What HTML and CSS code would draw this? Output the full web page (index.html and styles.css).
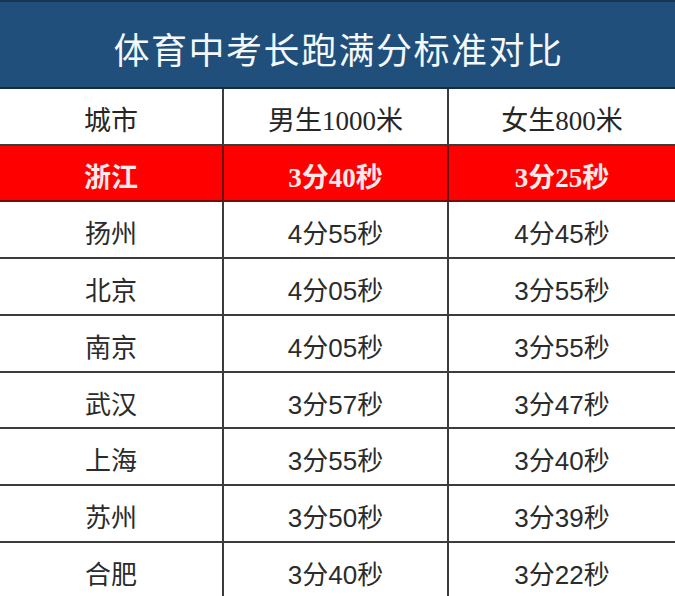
FILE: index.html
```html
<!DOCTYPE html>
<html lang="zh-CN">
<head>
<meta charset="utf-8">
<title>体育中考长跑满分标准对比</title>
<link rel="stylesheet" href="styles.css">
</head>
<body>
<div class="sheet">
  <div class="title">体育中考长跑满分标准对比</div>
  <div class="grid">
    <div class="row head"><div class="cell">城市</div><div class="cell">男生1000米</div><div class="cell">女生800米</div></div>
    <div class="row hot short"><div class="cell">浙江</div><div class="cell">3分40秒</div><div class="cell">3分25秒</div></div>
    <div class="row"><div class="cell">扬州</div><div class="cell">4分55秒</div><div class="cell">4分45秒</div></div>
    <div class="row"><div class="cell">北京</div><div class="cell">4分05秒</div><div class="cell">3分55秒</div></div>
    <div class="row"><div class="cell">南京</div><div class="cell">4分05秒</div><div class="cell">3分55秒</div></div>
    <div class="row short"><div class="cell">武汉</div><div class="cell">3分57秒</div><div class="cell">3分47秒</div></div>
    <div class="row"><div class="cell">上海</div><div class="cell">3分55秒</div><div class="cell">3分40秒</div></div>
    <div class="row"><div class="cell">苏州</div><div class="cell">3分50秒</div><div class="cell">3分39秒</div></div>
    <div class="row"><div class="cell">合肥</div><div class="cell">3分40秒</div><div class="cell">3分22秒</div></div>
  </div>
</div>
</body>
</html>
```

FILE: styles.css
```css
html, body {
  margin: 0;
  padding: 0;
  background: #ffffff;
}
.sheet {
  width: 675px;
  height: 596px;
  overflow: hidden;
  background: #ffffff;
}
.title {
  box-sizing: border-box;
  height: 89px;
  background: #1f4f7a;
  border-top: 2px solid #1b3450;
  border-bottom: 2px solid #1c2b3c;
  color: #f4f8fb;
  font-family: "Noto Sans CJK SC", sans-serif;
  font-size: 36px;
  letter-spacing: 1.5px;
  display: flex;
  align-items: center;
  justify-content: center;
  padding-top: 6px;
  padding-left: 2px;
}
.grid {
  display: flex;
  flex-direction: column;
}
.row {
  display: grid;
  grid-template-columns: 224px 225px 226px;
  height: 57px;
  box-sizing: border-box;
  border-bottom: 2px solid #3c3c3c;
}
.row.short {
  height: 56px;
}
.cell {
  display: flex;
  align-items: center;
  justify-content: center;
  padding-top: 4px;
  font-family: "Liberation Sans", "Noto Sans CJK SC", sans-serif;
  font-size: 26px;
  color: #2b2b2b;
  border-right: 2px solid #3c3c3c;
}
.cell:last-child {
  border-right: none;
}
.head .cell {
  font-family: "Liberation Serif", "Noto Sans CJK SC", serif;
  font-size: 27px;
  color: #262626;
}
.hot {
  background: #ff0000;
  border-bottom-color: #6a1010;
}
.hot .cell {
  font-family: "Liberation Serif", "Noto Sans CJK SC", serif;
  font-weight: bold;
  font-size: 27px;
  color: #ffe9e9;
  border-right-color: #6a1010;
}
```
